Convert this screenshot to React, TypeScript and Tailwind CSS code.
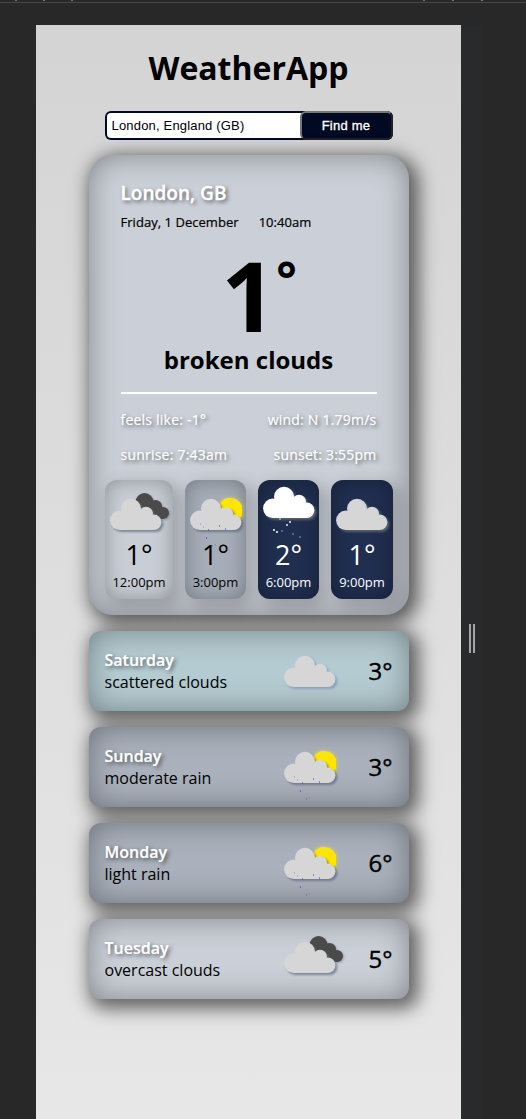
type Kind = "cloud" | "sunrain" | "snow" | "overcast";

const rain = [
  [10, 25, 0.25], [13, 28, 0.25], [18, 31, 0.6], [29, 27, 0.6],
  [35, 30, 0.6], [16, 39, 0.7], [22, 47, 0.4], [25, 46, 0.25],
];
const snow = [
  [16, 32, 0.5], [26, 35, 0.9], [23, 38, 0.9], [10, 43, 1],
  [13, 45, 1], [18, 44, 0.35], [29, 47, 0.35], [36, 50, 0.35],
];

function WeatherIcon({ kind, glow }: { kind: Kind; glow: string }) {
  const fill = kind === "snow" ? "#ffffff" : "#d6d6d6";
  return (
    <svg width="60" height="54" viewBox="0 0 60 54" className="block shrink-0 overflow-visible">
      {kind === "sunrain" && (
        <g style={{ filter: "drop-shadow(0 0 2px rgba(255,230,0,.7))" }}>
          <path d="M52 8v9a12.6 12.6 0 1 1 0-9z" fill="#ffe600" />
        </g>
      )}
      {kind === "overcast" && (
        <g fill="#4a4a4a" style={{ filter: "drop-shadow(1px 1px 1px rgba(70,80,90,.4))" }}>
          <circle cx="34.5" cy="4" r="9" />
          <circle cx="45.5" cy="8.7" r="6.7" />
          <circle cx="53" cy="15" r="6" />
          <path d="M34 4L50 9L53 21L47 20L32 12z" />
        </g>
      )}
      <g fill={fill} style={{ filter: `drop-shadow(2px 2px 1px ${glow})` }}>
        <circle cx="9.8" cy="22.3" r="9.7" />
        <circle cx="21" cy="10.7" r="10" />
        <circle cx="36" cy="15.8" r="7" />
        <circle cx="43.7" cy="24.3" r="7.7" />
        <path d="M10 32V20L16 12H28L36 14L44 20V32z" />
      </g>
      {kind === "sunrain" &&
        rain.map(([x, y, o]) => (
          <rect key={`${x}-${y}`} x={x} y={y} width="1" height="2" fill="#4b43d8" opacity={o} />
        ))}
      {kind === "snow" &&
        snow.map(([x, y, o]) => (
          <circle key={`${x}-${y}`} cx={x + 1} cy={y + 1} r="1" fill="#fff" opacity={o} />
        ))}
    </svg>
  );
}

const hours: { kind: Kind; temp: string; time: string; cls: string; glow: string }[] = [
  { kind: "overcast", temp: "1°", time: "12:00pm", glow: "rgba(90,105,125,.7)", cls: "w-[68px] bg-[#c9ced6] text-black" },
  { kind: "sunrain", temp: "1°", time: "3:00pm", glow: "rgba(90,105,120,.7)", cls: "w-[61px] bg-[#a5adb8] text-black" },
  { kind: "snow", temp: "2°", time: "6:00pm", glow: "rgba(110,120,125,.7)", cls: "w-[61px] bg-[#202e4f] text-white" },
  { kind: "cloud", temp: "1°", time: "9:00pm", glow: "rgba(110,120,125,.7)", cls: "w-[62px] bg-[#202e4f] text-white" },
];

const days: { kind: Kind; day: string; desc: string; temp: string; cls: string; icon: string; glow: string }[] = [
  { kind: "cloud", day: "Saturday", desc: "scattered clouds", temp: "3°", glow: "rgba(130,150,185,.8)", cls: "bg-[#b4cbd1]", icon: "mt-[22px]" },
  { kind: "sunrain", day: "Sunday", desc: "moderate rain", temp: "3°", glow: "rgba(90,105,120,.7)", cls: "bg-[#aab1bc]", icon: "mt-[22px]" },
  { kind: "sunrain", day: "Monday", desc: "light rain", temp: "6°", glow: "rgba(90,105,120,.7)", cls: "bg-[#aab1bc]", icon: "mt-[22px]" },
  { kind: "overcast", day: "Tuesday", desc: "overcast clouds", temp: "5°", glow: "rgba(90,105,125,.7)", cls: "bg-[#cbd0d8]", icon: "mt-[18px]" },
];

export default function App() {
  return (
    <div className="flex h-[1119px] w-[526px] flex-col overflow-hidden bg-[#282828] font-['Open_Sans','Noto_Sans',sans-serif] text-black">
      <div className="flex h-[3px] shrink-0 justify-between border-b border-[#484848] pr-[43px] pl-[15px]">
        <div className="flex gap-[26px]">
          <i className="h-px w-[2px] bg-[#777]" />
          <i className="h-px w-[2px] bg-[#777]" />
          <i className="h-px w-[2px] bg-[#777]" />
        </div>
        <div className="flex gap-[27px]">
          <i className="h-px w-[2px] bg-[#777]" />
          <i className="h-px w-[2px] bg-[#777]" />
          <i className="h-px w-[2px] bg-[#777]" />
        </div>
      </div>
      <div className="mt-[22px] flex min-h-0 flex-1 pl-9">
        <main className="flex w-[425px] shrink-0 flex-col items-center bg-linear-to-b from-[#d4d4d4] to-[#e7e7e7]">
          <h1 className="mt-[21px] h-11 text-[32px] leading-[44px] font-bold">WeatherApp</h1>
          <div className="mt-[21px] flex h-[29px] w-[288px] rounded-md bg-[#010a22] font-['Liberation_Sans',Arial,sans-serif] text-[13px]">
            <div className="my-0.5 ml-0.5 flex flex-1 items-center rounded-l-[4px] bg-white pl-[5px] tracking-[0.18px]">London, England (GB)</div>
            <button className="-ml-1 flex w-[93px] items-center justify-center rounded-md border-2 border-[#767676] border-r-[#212121] border-b-[#212121] bg-[#010a22] tracking-[0.25px] text-white [-webkit-text-stroke:0.3px_white]">Find me</button>
          </div>

          <section className="mt-[15px] flex h-[460px] w-80 shrink-0 flex-col rounded-[24px] bg-[#cbd0d8] px-4 pb-4 shadow-[5px_5px_18px_5px_rgba(0,0,0,0.56),inset_0_0_30px_rgba(0,0,0,0.36)]">
            <div className="flex flex-col px-4">
              <h2 className="mt-6 h-7 text-[19px] leading-7 font-semibold text-white [-webkit-text-stroke:0.3px_white] [text-shadow:2px_2px_4px_rgba(0,0,0,.6)]">London, GB</h2>
              <div className="mt-[5px] flex h-5 gap-5 text-[13px] leading-5 tracking-[0.04px] [-webkit-text-stroke:0.2px_black]">
                <span>Friday, 1 December</span>
                <span>10:40am</span>
              </div>
              <div className="mt-[23px] flex h-[80px] justify-center pl-[21px] font-bold">
                <span className="text-[96px] leading-[80px]">1</span>
                <span className="text-[48px] leading-[48px]">°</span>
              </div>
              <div className="mt-2 h-[33px] text-center text-[24px] leading-[33px] font-bold">broken clouds</div>
              <div className="mt-[16px] h-0.5 bg-white" />
              <div className="mt-4 flex h-5 justify-between text-[14px] leading-5 tracking-[0.22px] text-white [-webkit-text-stroke:0.2px_white] [text-shadow:2px_2px_4px_rgba(0,0,0,.6)]">
                <span>feels like: -1°</span>
                <span>wind: N 1.79m/s</span>
              </div>
              <div className="mt-[15px] flex h-5 justify-between text-[14px] leading-5 tracking-[0.22px] text-white [-webkit-text-stroke:0.2px_white] [text-shadow:2px_2px_4px_rgba(0,0,0,.6)]">
                <span>sunrise: 7:43am</span>
                <span>sunset: 3:55pm</span>
              </div>
            </div>
            <div className="mt-auto flex justify-between">
              {hours.map((h) => (
                <div key={h.time} className={`flex h-[119px] flex-col items-center rounded-xl shadow-[6px_6px_16px_3px_rgba(0,0,0,0.2),inset_0_0_20px_rgba(0,0,0,0.3)] ${h.cls}`}>
                  <div className={`flex h-[58px] w-full shrink-0 pl-[5px] ${h.kind === "snow" ? "pt-1.5" : "pt-[18px]"}`}>
                    <WeatherIcon kind={h.kind} glow={h.glow} />
                  </div>
                  <div className="h-[34px] pl-px text-[27px] leading-[34px]">{h.temp}</div>
                  <div className="h-5 pl-px text-[13px] leading-5">{h.time}</div>
                </div>
              ))}
            </div>
          </section>

          <div className="mt-4 flex flex-col gap-4">
            {days.map((d) => (
              <section key={d.day} className={`flex h-20 w-80 items-center rounded-xl px-4 shadow-[5px_5px_18px_5px_rgba(0,0,0,0.56),inset_0_0_30px_rgba(0,0,0,0.36)] ${d.cls}`}>
                <div className="flex w-[179px] flex-col leading-[22px]">
                  <span className="text-[16px] font-semibold text-white [-webkit-text-stroke:0.2px_white] [text-shadow:2px_2px_4px_rgba(0,0,0,.6)]">{d.day}</span>
                  <span className="text-[16px]">{d.desc}</span>
                </div>
                <div className={d.icon}>
                  <WeatherIcon kind={d.kind} glow={d.glow} />
                </div>
                <span className="ml-auto text-[24px] leading-8 [-webkit-text-stroke:0.4px_black]">{d.temp}</span>
              </section>
            ))}
          </div>
        </main>
        <aside className="flex w-5 shrink-0 bg-[#282a2c] pt-[599px] pl-2">
          <div className="h-[29px] w-[6px] border-x-2 border-[#a5a5a5]" />
        </aside>
      </div>
    </div>
  );
}
